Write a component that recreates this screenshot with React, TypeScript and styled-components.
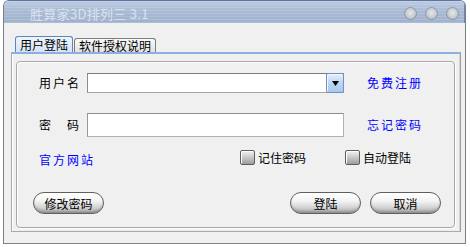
import React from "react";
import styled, { createGlobalStyle } from "styled-components";

const GlobalStyle = createGlobalStyle`
  html, body {
    margin: 0;
    padding: 0;
    background: #ffffff;
  }
  body {
    font-family: "Noto Sans CJK SC", "Liberation Sans", sans-serif;
    font-size: 12px;
  }
`;

const App = () => {
  return (
    <>
      <GlobalStyle />
      <StWindow>
        <StTitleBar>
          <StTitle>胜算家3D排列三 3.1</StTitle>
          <StTitleButtons>
            <StRoundButton />
            <StRoundButton />
            <StRoundButton />
          </StTitleButtons>
        </StTitleBar>
        <StBody>
          <StTabStrip>
            <StTab $active>用户登陆</StTab>
            <StTab>软件授权说明</StTab>
          </StTabStrip>
          <StPanel>
            <StGroupBox>
              <StRow $height={20} $top={11}>
                <StLabel>用户名</StLabel>
                <StCombo>
                  <StComboInput />
                  <StDropButton>
                    <svg width="7" height="5" viewBox="0 0 7 5">
                      <path d="M0 0 H7 L3.5 5 Z" fill="#000" />
                    </svg>
                  </StDropButton>
                </StCombo>
                <StLink>免费注册</StLink>
              </StRow>
              <StRow $height={24} $top={20}>
                <StLabel>密　码</StLabel>
                <StInput type="password" />
                <StLink>忘记密码</StLink>
              </StRow>
              <StRow $height={17} $top={12}>
                <StSiteLink>官方网站</StSiteLink>
                <StCheckLabel $width={105}>
                  <StCheckBox />
                  记住密码
                </StCheckLabel>
                <StCheckLabel>
                  <StCheckBox />
                  自动登陆
                </StCheckLabel>
              </StRow>
              <StButtonRow>
                <StPillButton>修改密码</StPillButton>
                <StSpacer />
                <StPillButton>登陆</StPillButton>
                <StPillButton>取消</StPillButton>
              </StButtonRow>
            </StGroupBox>
          </StPanel>
        </StBody>
      </StWindow>
    </>
  );
};

const StWindow = styled.div`
  margin-left: 3px;
  width: 463px;
  height: 244px;
  box-sizing: border-box;
  border: 1px solid #7b7f88;
  border-top-color: #5f74a0;
  border-radius: 6px 6px 0 0;
  overflow: hidden;
  background: #f0f0f0;
  display: flex;
  flex-direction: column;
`;

const StTitleBar = styled.div`
  height: 22px;
  flex-shrink: 0;
  display: flex;
  align-items: center;
  justify-content: space-between;
  padding: 0 5px 0 26px;
  background:
    repeating-linear-gradient(
      to bottom,
      rgba(255, 255, 255, 0.14) 0 1px,
      transparent 1px 3px
    ),
    linear-gradient(to bottom, #bccae0 0%, #a9bad4 45%, #9eb1cd 100%);
  border-right: 1px solid #6d86b6;
`;

const StTitle = styled.span`
  color: #d9e2ef;
  font-size: 13px;
  letter-spacing: 0.3px;
  padding-top: 2px;
`;

const StTitleButtons = styled.div`
  display: flex;
  gap: 8px;
  padding-top: 3px;
`;

const StRoundButton = styled.span`
  width: 13px;
  height: 13px;
  border-radius: 50%;
  box-sizing: border-box;
  border: 1px solid #8b97ab;
  background: radial-gradient(
    circle at 50% 45%,
    #e4e6ea 0%,
    #c9cdd3 55%,
    #9fa6b1 100%
  );
`;

const StBody = styled.div`
  flex: 1;
  display: flex;
  flex-direction: column;
  padding: 13px 3px 11px 7px;
`;

const StTabStrip = styled.div`
  display: flex;
  align-items: flex-end;
  height: 16px;
  padding-left: 4px;
  position: relative;
  z-index: 1;
`;

const StTab = styled.div<{ $active?: boolean }>`
  box-sizing: border-box;
  height: ${({ $active }) => ($active ? "16px" : "14px")};
  padding: 0 4px;
  margin-right: 1px;
  display: flex;
  align-items: center;
  font-size: 12px;
  line-height: 1;
  color: #000;
  border: 1px solid ${({ $active }) => ($active ? "#5a86c6" : "#7d7d7d")};
  border-bottom: none;
  border-radius: 3px 3px 0 0;
  background: ${({ $active }) =>
    $active
      ? "linear-gradient(to bottom, #eef4fc 0%, #d6e4f6 100%)"
      : "linear-gradient(to bottom, #fafafa 0%, #e2e2e2 100%)"};
`;

const StPanel = styled.div`
  flex: 1;
  display: flex;
  box-sizing: border-box;
  width: 450px;
  border-top: 2px solid #8cb0e0;
  border-left: 1px solid #a9a9a9;
  border-right: 1px solid #9b9b9b;
  border-bottom: 1px solid #a9a9a9;
  box-shadow: inset 1px 0 0 #ffffff, inset -1px 0 0 #d8d8d8;
  padding: 7px 5px 3px 4px;
`;

const StGroupBox = styled.div`
  flex: 1;
  box-sizing: border-box;
  border: 1px solid #a8a8a8;
  border-radius: 4px;
  box-shadow: inset 1px 1px 0 #ffffff, 1px 1px 0 #ffffff;
  display: flex;
  flex-direction: column;
`;

const StRow = styled.div<{ $height: number; $top: number }>`
  display: flex;
  align-items: center;
  height: ${({ $height }) => $height}px;
  margin-top: ${({ $top }) => $top}px;
  padding-left: 22px;
`;

const StLabel = styled.span`
  width: 48px;
  flex-shrink: 0;
  letter-spacing: 2px;
  color: #000;
  line-height: 1;
`;

const StCombo = styled.div`
  width: 257px;
  height: 20px;
  box-sizing: border-box;
  display: flex;
  border: 1px solid #a5a5a5;
  border-top-color: #7c7c7c;
  border-left-color: #8c8c8c;
  background: #ffffff;
`;

const StComboInput = styled.input`
  flex: 1;
  border: none;
  outline: none;
  padding: 0 3px;
  background: transparent;
  font: inherit;
`;

const StDropButton = styled.span`
  width: 18px;
  margin: -1px -1px -1px 0;
  box-sizing: border-box;
  display: flex;
  align-items: center;
  justify-content: center;
  border: 1px solid #6f92c2;
  border-radius: 2px;
  background: linear-gradient(to bottom, #e6f0fb 0%, #bcd6f2 50%, #a8c8ec 100%);
  box-shadow: inset 1px 1px 0 #f4f8fd;
`;

const StInput = styled.input`
  width: 257px;
  height: 24px;
  box-sizing: border-box;
  border: 1px solid #b0b0b0;
  border-top-color: #8e8e8e;
  border-left-color: #989898;
  outline: none;
  padding: 0 3px;
  font: inherit;
  background: #ffffff;
`;

const StLink = styled.span`
  margin-left: 23px;
  color: #0000ff;
  letter-spacing: 2px;
  line-height: 1;
  cursor: pointer;
`;

const StSiteLink = styled.span`
  width: 201px;
  flex-shrink: 0;
  align-self: flex-end;
  color: #0000ff;
  letter-spacing: 2px;
  line-height: 13px;
  cursor: pointer;
`;

const StCheckLabel = styled.label<{ $width?: number }>`
  display: flex;
  align-items: center;
  gap: 3px;
  width: ${({ $width }) => ($width ? `${$width}px` : "auto")};
  color: #000;
  line-height: 1;
`;

const StCheckBox = styled.span`
  width: 15px;
  height: 15px;
  box-sizing: border-box;
  border: 1px solid #5e5e5e;
  border-radius: 2px;
  background: linear-gradient(to bottom, #f2f2f2 0%, #c4c4c4 55%, #9c9c9c 100%);
  box-shadow: inset 1px 1px 0 #ffffff;
`;

const StButtonRow = styled.div`
  display: flex;
  align-items: center;
  gap: 9px;
  margin-top: 26px;
  padding-left: 16px;
`;

const StSpacer = styled.span`
  width: 168px;
`;

const StPillButton = styled.button`
  width: 71px;
  height: 22px;
  box-sizing: border-box;
  padding: 0;
  border: 1px solid #5f5f5f;
  border-radius: 11px;
  font: inherit;
  font-size: 12px;
  color: #000;
  background: linear-gradient(
    to bottom,
    #ffffff 0%,
    #f4f4f4 40%,
    #d0d0d0 75%,
    #a4a4a4 100%
  );
  box-shadow: inset 0 -2px 2px rgba(0, 0, 0, 0.14), inset 0 1px 0 #ffffff;
  cursor: pointer;
`;

export default App;
